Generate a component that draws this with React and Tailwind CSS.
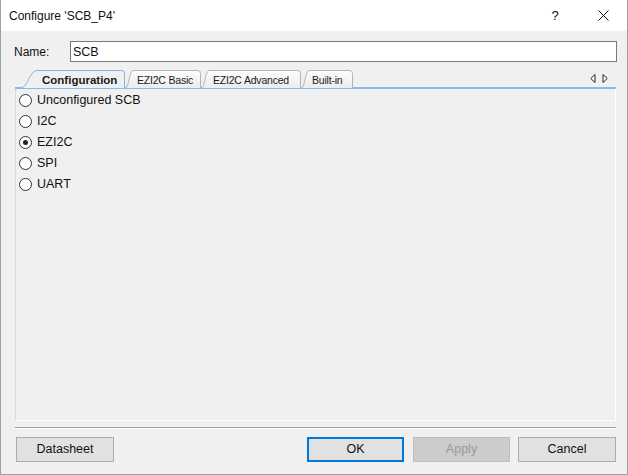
import { useState } from 'react'

const options = ['Unconfigured SCB', 'I2C', 'EZI2C', 'SPI', 'UART']

function Tab({ label, active, width, slant, textLeft, className = '' }) {
    const h = 18
    const d = `M0.5 ${h} C ${slant * 0.45} ${h}, ${slant * 0.55} 1, ${slant} 0.5 L ${width - 3.5} 0.5 Q ${width - 0.5} 0.5 ${width - 0.5} 3.5 L ${width - 0.5} ${h}`
    return (
        <div className={`relative h-[18px] shrink-0 ${className}`} style={{ width }}>
            <svg className="absolute inset-0" width={width} height={h} viewBox={`0 0 ${width} ${h}`}>
                <defs>
                    <linearGradient id="tabg" x1="0" y1="0" x2="0" y2="1">
                        <stop offset="0" stopColor="#fdfdfd" />
                        <stop offset="1" stopColor="#ececec" />
                    </linearGradient>
                </defs>
                <path d={d + ' Z'} fill={active ? '#f0f0f0' : 'url(#tabg)'} stroke="none" />
                <path d={d} fill="none" stroke={active ? '#7eb4ea' : '#b4b4b4'} strokeWidth="1" />
            </svg>
            <span
                className={`relative block leading-[18px] pt-[1px] text-[#1a1a1a] whitespace-nowrap ${active ? 'font-bold text-[11.5px]' : 'text-[10.5px] tracking-[-0.2px]'}`}
                style={{ paddingLeft: textLeft }}
            >
                {label}
            </span>
        </div>
    )
}

function Radio({ label, checked, onClick }) {
    return (
        <div className="flex items-center h-[21px] pl-[3px] gap-[5px] cursor-default" onClick={onClick}>
            <span className="w-[13px] h-[13px] rounded-full border border-[#333333] bg-white flex items-center justify-center">
                {checked && <span className="w-[5px] h-[5px] rounded-full bg-[#222222]" />}
            </span>
            <span className="text-[12.5px] text-[#111111]">{label}</span>
        </div>
    )
}

export default function App() {
    const [mode, setMode] = useState('EZI2C')
    const [name, setName] = useState('SCB')

    return (
        <div className="w-[628px] h-[475px] flex flex-col bg-[#f0f0f0] border-x border-b border-[#a0a0a0] font-['Liberation_Sans',Arial,sans-serif] text-[#111111] select-none">
            {/* title bar */}
            <div className="h-[31px] bg-white flex items-center pl-[8px] shrink-0">
                <span className="text-[12px] flex-1">Configure 'SCB_P4'</span>
                <span className="text-[13px] w-[46px] text-center mr-[2px]">?</span>
                <span className="w-[46px] flex justify-center mr-[1px]">
                    <svg width="11" height="11" viewBox="0 0 11 11">
                        <path d="M0.5 0.5 L10.5 10.5 M10.5 0.5 L0.5 10.5" stroke="#111" strokeWidth="1" />
                    </svg>
                </span>
            </div>

            <div className="flex-1 flex flex-col pl-[14px] pr-[10px] pb-[12px]">
                {/* name row */}
                <div className="flex items-center mt-[10px] h-[21px]">
                    <span className="w-[55px] text-[12px] -ml-[1px]">Name:</span>
                    <input
                        value={name}
                        onChange={e => setName(e.target.value)}
                        className="flex-1 h-[21px] ml-[1px] border border-[#7a7a7a] bg-white px-[2px] text-[12.5px] outline-none"
                    />
                </div>

                {/* tabs */}
                <div className="flex items-end mt-[8px] h-[18px] mr-[1px] relative">
                    <Tab label="Configuration" active width={105} slant={17} textLeft={22} className="ml-[5px]" />
                    <Tab label="EZI2C Basic" width={76} slant={8} textLeft={12} />
                    <Tab label="EZI2C Advanced" width={100} slant={8} textLeft={12} />
                    <Tab label="Built-in" width={52} slant={8} textLeft={11} />
                    <div className="flex-1" />
                    <div className="flex items-center gap-[6px] mr-[8px] mb-[5px]">
                        <svg width="6" height="9" viewBox="0 0 6 9">
                            <path d="M5 0.5 L0.8 4.5 L5 8.5 Z" fill="#ffffff" stroke="#222" strokeWidth="1" />
                        </svg>
                        <svg width="6" height="9" viewBox="0 0 6 9">
                            <path d="M1 0.5 L5.2 4.5 L1 8.5 Z" fill="#ffffff" stroke="#222" strokeWidth="1" />
                        </svg>
                    </div>
                </div>
                <div className="h-[2px] bg-[#8ab9ee] mr-[1px] -mt-[1px]" />

                {/* panel */}
                <div className="flex-1 border-l border-[#dadada] border-r border-b border-r-white border-b-white mr-[1px] pt-[1px]">
                    {options.map(o => (
                        <Radio key={o} label={o} checked={mode === o} onClick={() => setMode(o)} />
                    ))}
                </div>

                {/* separator */}
                <div className="mt-[6px] h-px bg-[#a0a0a0] mr-[1px]" />
                <div className="h-px bg-white mr-[1px]" />

                {/* buttons */}
                <div className="flex mt-[8px] h-[25px] text-[12.5px]">
                    <button className="w-[98px] h-[25px] bg-[#e1e1e1] border border-[#adadad] ml-[1px]">Datasheet</button>
                    <div className="flex-1" />
                    <button className="w-[97px] h-[25px] bg-[#e1e1e1] border border-[#0078d7] outline outline-1 outline-[#0078d7] -outline-offset-2">OK</button>
                    <button className="w-[97px] h-[25px] bg-[#cccccc] border border-[#bfbfbf] text-[#9a9a9a] ml-[9px]">Apply</button>
                    <button className="w-[98px] h-[25px] bg-[#e1e1e1] border border-[#adadad] ml-[8px] mr-[1px]">Cancel</button>
                </div>
            </div>
        </div>
    )
}
